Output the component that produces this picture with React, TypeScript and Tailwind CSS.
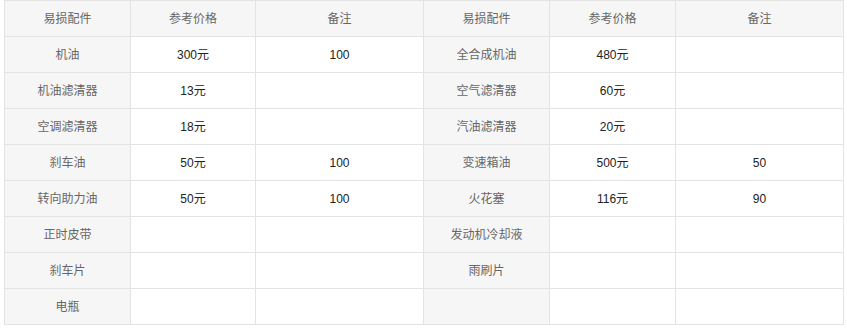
const left = [
  { name: "机油", price: "300元", note: "100" },
  { name: "机油滤清器", price: "13元", note: "" },
  { name: "空调滤清器", price: "18元", note: "" },
  { name: "刹车油", price: "50元", note: "100" },
  { name: "转向助力油", price: "50元", note: "100" },
  { name: "正时皮带", price: "", note: "" },
  { name: "刹车片", price: "", note: "" },
  { name: "电瓶", price: "", note: "" },
];

const right = [
  { name: "全合成机油", price: "480元", note: "" },
  { name: "空气滤清器", price: "60元", note: "" },
  { name: "汽油滤清器", price: "20元", note: "" },
  { name: "变速箱油", price: "500元", note: "50" },
  { name: "火花塞", price: "116元", note: "90" },
  { name: "发动机冷却液", price: "", note: "" },
  { name: "雨刷片", price: "", note: "" },
  { name: "", price: "", note: "" },
];

const cell = "border border-[#e3e3e3] h-[36px] p-0 text-center align-middle";

export default function App() {
  return (
    <div
      className="w-[847px] h-[331px] bg-white pl-[4px] text-[12px]"
      style={{ fontFamily: '"Liberation Sans", "Noto Sans CJK SC", sans-serif' }}
    >
      <table className="table-fixed border-collapse w-[839px]">
        <colgroup>
          <col className="w-[126px]" />
          <col className="w-[125px]" />
          <col className="w-[168px]" />
          <col className="w-[126px]" />
          <col className="w-[126px]" />
          <col className="w-[168px]" />
        </colgroup>
        <thead>
          <tr className="bg-[#f6f6f6] text-[#666]">
            <th className={`${cell} font-normal`}>易损配件</th>
            <th className={`${cell} font-normal`}>参考价格</th>
            <th className={`${cell} font-normal`}>备注</th>
            <th className={`${cell} font-normal`}>易损配件</th>
            <th className={`${cell} font-normal`}>参考价格</th>
            <th className={`${cell} font-normal`}>备注</th>
          </tr>
        </thead>
        <tbody>
          {left.map((l, i) => {
            const r = right[i];
            return (
              <tr key={i}>
                <td className={`${cell} bg-[#f6f6f6] text-[#666]`}>{l.name}</td>
                <td className={`${cell} text-[#222]`}>{l.price}</td>
                <td className={`${cell} text-[#222]`}>{l.note}</td>
                <td className={`${cell} bg-[#f6f6f6] text-[#666]`}>{r.name}</td>
                <td className={`${cell} text-[#222]`}>{r.price}</td>
                <td className={`${cell} text-[#222]`}>{r.note}</td>
              </tr>
            );
          })}
        </tbody>
      </table>
    </div>
  );
}
